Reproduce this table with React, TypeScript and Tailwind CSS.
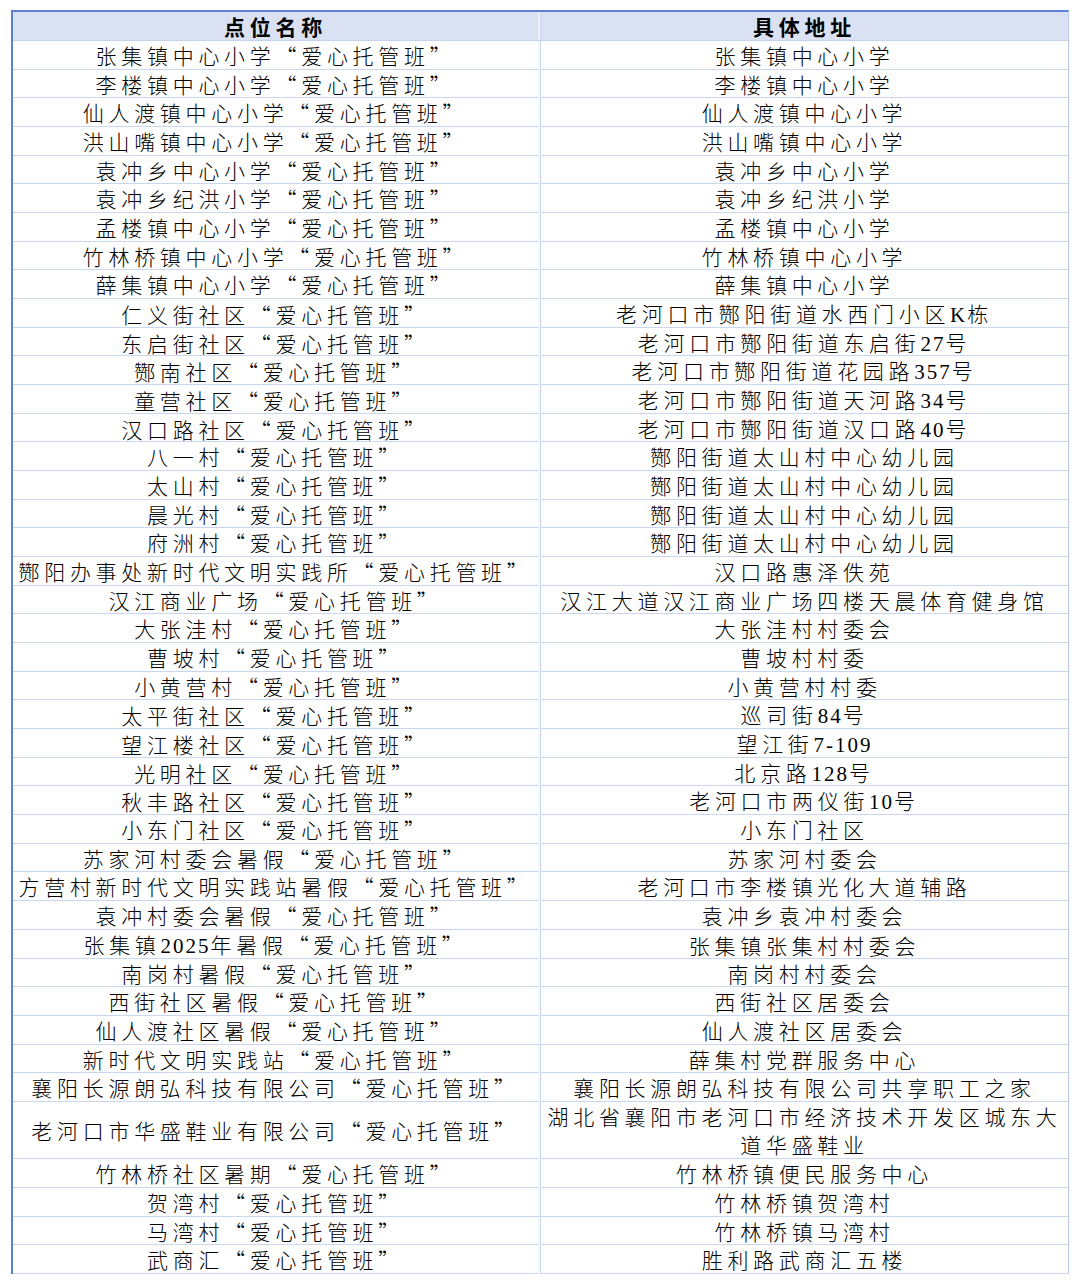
import { Fragment } from 'react';

type Row = [string, string];

const T = '“爱心托管班”';

const rows: Row[] = [
  ['张集镇中心小学' + T, '张集镇中心小学'],
  ['李楼镇中心小学' + T, '李楼镇中心小学'],
  ['仙人渡镇中心小学' + T, '仙人渡镇中心小学'],
  ['洪山嘴镇中心小学' + T, '洪山嘴镇中心小学'],
  ['袁冲乡中心小学' + T, '袁冲乡中心小学'],
  ['袁冲乡纪洪小学' + T, '袁冲乡纪洪小学'],
  ['孟楼镇中心小学' + T, '孟楼镇中心小学'],
  ['竹林桥镇中心小学' + T, '竹林桥镇中心小学'],
  ['薛集镇中心小学' + T, '薛集镇中心小学'],
  ['仁义街社区' + T, '老河口市酂阳街道水西门小区K栋'],
  ['东启街社区' + T, '老河口市酂阳街道东启街27号'],
  ['酂南社区' + T, '老河口市酂阳街道花园路357号'],
  ['童营社区' + T, '老河口市酂阳街道天河路34号'],
  ['汉口路社区' + T, '老河口市酂阳街道汉口路40号'],
  ['八一村' + T, '酂阳街道太山村中心幼儿园'],
  ['太山村' + T, '酂阳街道太山村中心幼儿园'],
  ['晨光村' + T, '酂阳街道太山村中心幼儿园'],
  ['府洲村' + T, '酂阳街道太山村中心幼儿园'],
  ['酂阳办事处新时代文明实践所' + T, '汉口路惠泽佚苑'],
  ['汉江商业广场' + T, '汉江大道汉江商业广场四楼天晨体育健身馆'],
  ['大张洼村' + T, '大张洼村村委会'],
  ['曹坡村' + T, '曹坡村村委'],
  ['小黄营村' + T, '小黄营村村委'],
  ['太平街社区' + T, '巡司街84号'],
  ['望江楼社区' + T, '望江街7-109'],
  ['光明社区' + T, '北京路128号'],
  ['秋丰路社区' + T, '老河口市两仪街10号'],
  ['小东门社区' + T, '小东门社区'],
  ['苏家河村委会暑假' + T, '苏家河村委会'],
  ['方营村新时代文明实践站暑假' + T, '老河口市李楼镇光化大道辅路'],
  ['袁冲村委会暑假' + T, '袁冲乡袁冲村委会'],
  ['张集镇2025年暑假' + T, '张集镇张集村村委会'],
  ['南岗村暑假' + T, '南岗村村委会'],
  ['西街社区暑假' + T, '西街社区居委会'],
  ['仙人渡社区暑假' + T, '仙人渡社区居委会'],
  ['新时代文明实践站' + T, '薛集村党群服务中心'],
  ['襄阳长源朗弘科技有限公司' + T, '襄阳长源朗弘科技有限公司共享职工之家'],
  ['老河口市华盛鞋业有限公司' + T, '湖北省襄阳市老河口市经济技术开发区城东大道华盛鞋业'],
  ['竹林桥社区暑期' + T, '竹林桥镇便民服务中心'],
  ['贺湾村' + T, '竹林桥镇贺湾村'],
  ['马湾村' + T, '竹林桥镇马湾村'],
  ['武商汇' + T, '胜利路武商汇五楼'],
];

// latin runs get a Times-like face, the rest stays CJK
function Mixed({ text }: { text: string }) {
  const parts = text.split(/([A-Za-z0-9\-]+)/);
  return (
    <>
      {parts.map((p, i) =>
        /^[A-Za-z0-9\-]+$/.test(p) ? (
          <span key={i} className="font-['Liberation_Serif',serif] font-normal tracking-[2px]">
            {p}
          </span>
        ) : (
          <Fragment key={i}>{p}</Fragment>
        ),
      )}
    </>
  );
}

export default function App() {
  return (
    <div className="w-[1080px] h-[1283px] bg-white pt-[10px] pl-[11px]">
      <div className="w-[1058px] border-t-2 border-l-2 border-t-[#5b80d6] border-l-[#5b80d6] border-r border-r-[#b8cbee] font-['Noto_Sans_CJK_SC',sans-serif] text-black text-[21px] tracking-[4.7px]">
        <div className="grid grid-cols-[527px_1fr] h-[29px] bg-[#d9e1f3] border-b border-[#c2d2ef] font-bold leading-[28px]">
          <div className="text-center border-r-2 border-[#eef2fa]">点位名称</div>
          <div className="text-center border-l border-[#c9d7f0]">具体地址</div>
        </div>
        {rows.map(([a, b], i) => {
          const tall = i === 37;
          return (
            <div
              key={i}
              className={
                'grid grid-cols-[527px_1fr] border-b border-[#c9d7f0] font-light leading-[28.6px] ' +
                (tall ? 'h-[57.3px]' : 'h-[28.68px]')
              }
            >
              <div className="flex items-center justify-center text-center border-r-2 border-[#f4f7fc] whitespace-nowrap">
                <span>
                  <Mixed text={a} />
                </span>
              </div>
              <div className="flex items-center justify-center text-center border-l border-[#c9d7f0] px-[4px]">
                <span className={tall ? '' : 'whitespace-nowrap'}>
                  <Mixed text={b} />
                </span>
              </div>
            </div>
          );
        })}
      </div>
    </div>
  );
}
